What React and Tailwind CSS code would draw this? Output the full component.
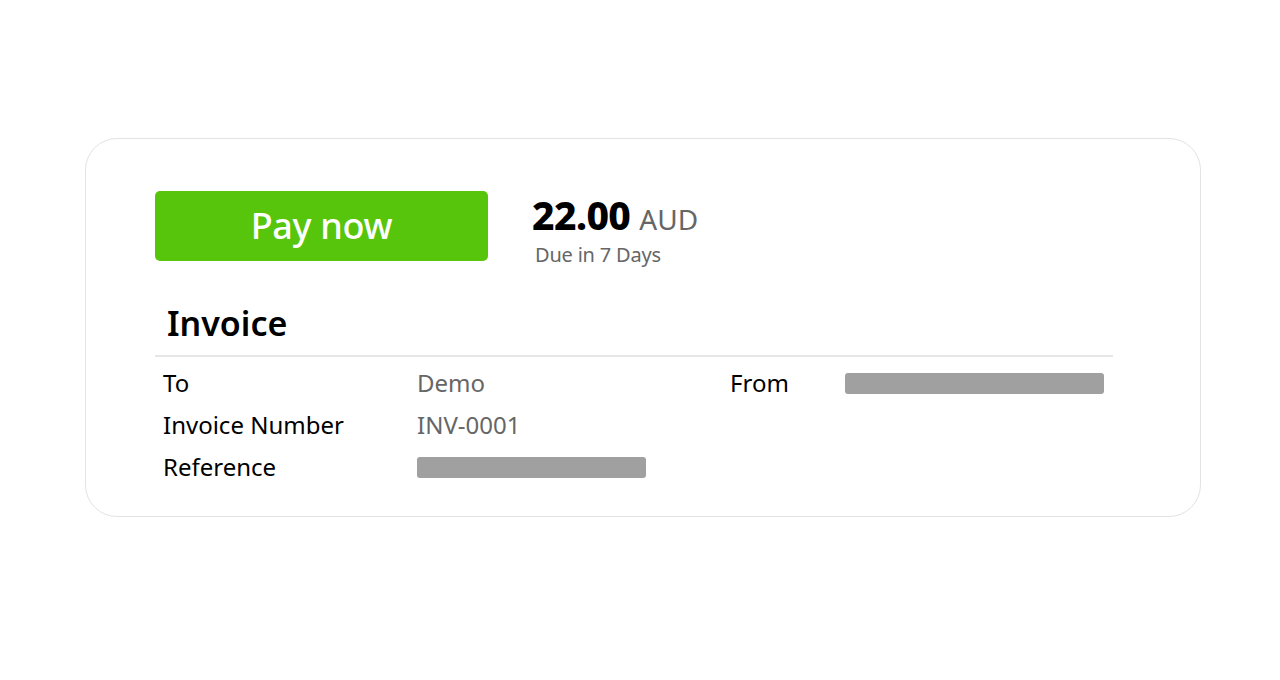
export default function App() {
  const font = { fontFamily: '"Noto Sans", "Open Sans", sans-serif' };
  return (
    <div className="w-[1280px] h-[680px] bg-white pt-[138px] pl-[85px]" style={font}>
      <div className="w-[1116px] h-[379px] rounded-[32px] border border-[#e3e3e3] pl-[69px] pt-[52px]">
        <div className="flex items-start">
          <div className="w-[333px] h-[70px] rounded-[5px] bg-[#56c50b] flex items-center justify-center text-white text-[36px] font-medium tracking-[-0.3px]">
            Pay now
          </div>
          <div className="ml-[44px] mt-[4px]">
            <div className="flex items-baseline leading-none">
              <span className="text-[39px] font-extrabold text-black tracking-[-0.6px]">22.00</span>
              <span className="ml-[9px] text-[28px] text-[#666]">AUD</span>
            </div>
            <div className="mt-[11px] ml-[3px] text-[20px] text-[#666] leading-none tracking-[-0.2px]">Due in 7 Days</div>
          </div>
        </div>
        <div className="mt-[41px] ml-[12px] text-[34px] font-semibold text-black leading-none">Invoice</div>
        <div className="mt-[15px] w-[958px] h-[2px] bg-[#e6e6e6]" />
        <div className="mt-[5px] pl-[8px] text-[24px] leading-[42px]">
          <div className="flex items-center">
            <div className="w-[254px] text-black">To</div>
            <div className="w-[313px] text-[#666]">Demo</div>
            <div className="w-[115px] text-black">From</div>
            <div className="w-[259px] h-[21px] rounded-[3px] bg-[#a0a0a0]" />
          </div>
          <div className="flex items-center">
            <div className="w-[254px] text-black">Invoice Number</div>
            <div className="w-[313px] text-[#666]">INV-0001</div>
          </div>
          <div className="flex items-center">
            <div className="w-[254px] text-black">Reference</div>
            <div className="w-[229px] h-[21px] rounded-[3px] bg-[#a0a0a0]" />
          </div>
        </div>
      </div>
    </div>
  );
}
